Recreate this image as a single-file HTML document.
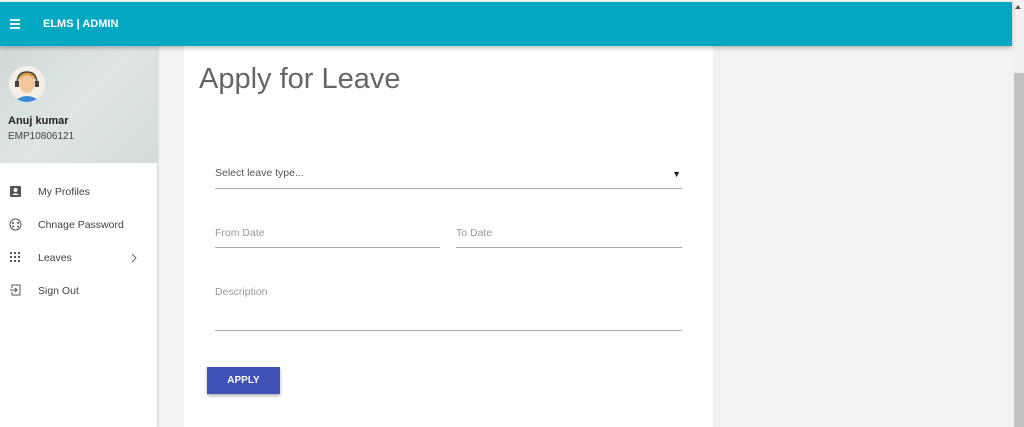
<!DOCTYPE html>
<html><head><style>
*{margin:0;padding:0;box-sizing:border-box}
body{width:1024px;height:427px;overflow:hidden;background:#f2f2f3;font-family:"Liberation Sans",sans-serif;position:relative}
.top{position:absolute;left:0;top:2px;width:1012px;height:44px;background:#00a8c1;box-shadow:0 2px 4px rgba(0,0,0,.25);z-index:3}
.top .ham{position:absolute;left:10px;top:17px;width:10px}
.top .ham i{display:block;height:1.5px;background:#e8f6f8;margin-bottom:2.5px}
.top .t{position:absolute;left:43px;top:16px;color:#fff;font-weight:bold;font-size:11px}
.sb{position:absolute;right:0;top:0;width:12px;height:427px;background:#f1f1f1}
.sb .th{position:absolute;left:2px;top:73px;width:10px;height:354px;background:#c1c1c1}
.side{position:absolute;left:0;top:46px;width:157px;height:381px;background:#fff;box-shadow:1px 0 2px rgba(0,0,0,.15)}
.prof{height:117px;background:linear-gradient(135deg,#cfd8d8 0%,#dfe5e5 50%,#d3dbdb 100%);position:relative}
.av{position:absolute;left:9px;top:20px;width:36px;height:36px;border-radius:50%;background:#f6efe6;overflow:hidden}
.name{position:absolute;left:8px;top:69px;font-size:11px;font-weight:bold;color:#222}
.emp{position:absolute;left:8px;top:85px;font-size:10px;color:#444}
.item{position:absolute;left:0;height:20px;font-size:10.5px;color:#444}
.item span{position:absolute;left:38px;top:4px;white-space:nowrap}
.card{position:absolute;left:184px;top:46px;width:529px;height:381px;background:#fff}
h1{position:absolute;left:15px;top:17px;font-weight:normal;font-size:29px;color:#666}
.f{position:absolute;font-size:10.5px;color:#999;border-bottom:1px solid #aaa;padding-top:2px}
.btn{position:absolute;left:23px;top:321px;width:73px;height:27px;background:#3f51b5;color:#fff;font-size:10px;font-weight:bold;text-align:center;line-height:27px;box-shadow:0 2px 3px rgba(0,0,0,.3)}
</style></head><body>
<div class="top"><div class="ham"><i></i><i></i><i></i></div><div class="t">ELMS | ADMIN</div></div>
<div class="side">
 <div class="prof">
  <div class="av"><svg width="36" height="36"><path d="M4 36 Q18 24 32 36Z" fill="#3b8ad6"/><ellipse cx="18" cy="17" rx="8" ry="10" fill="#f3c79a"/><path d="M10 14 Q18 4 26 14 L26 10 Q18 2 10 10Z" fill="#e09a3a"/><path d="M8 18 Q8 6 18 6 Q28 6 28 18" stroke="#444" stroke-width="1.5" fill="none"/><rect x="6" y="15" width="4" height="6" fill="#444"/><rect x="26" y="15" width="4" height="6" fill="#444"/></svg></div>
  <div class="name">Anuj kumar</div><div class="emp">EMP10806121</div>
 </div>
 <div class="item" style="top:136px"><svg style="position:absolute;left:10px;top:4px" width="11" height="11"><rect width="11" height="11" rx="1" fill="#555"/><circle cx="5.5" cy="4" r="2" fill="#fff"/><path d="M2 9 Q5.5 5.5 9 9Z" fill="#fff"/></svg><span>My Profiles</span></div>
 <div class="item" style="top:169px"><svg style="position:absolute;left:9px;top:3px" width="13" height="13"><circle cx="6.5" cy="6.5" r="5.5" stroke="#555" fill="none"/><circle cx="4" cy="5" r="1" fill="#555"/><circle cx="9" cy="5" r="1" fill="#555"/><circle cx="4" cy="8.5" r="1" fill="#555"/><circle cx="9" cy="8.5" r="1" fill="#555"/></svg><span>Chnage Password</span></div>
 <div class="item" style="top:202px;width:157px"><svg style="position:absolute;left:10px;top:4px" width="11" height="11" fill="#555"><rect x="0" y="0" width="2" height="2"/><rect x="4" y="0" width="2" height="2"/><rect x="8" y="0" width="2" height="2"/><rect x="0" y="4" width="2" height="2"/><rect x="4" y="4" width="2" height="2"/><rect x="8" y="4" width="2" height="2"/><rect x="0" y="8" width="2" height="2"/><rect x="4" y="8" width="2" height="2"/><rect x="8" y="8" width="2" height="2"/></svg><span>Leaves</span><svg style="position:absolute;left:131px;top:5px" width="6" height="10"><path d="M1 1 L5 5 L1 9" stroke="#666" fill="none"/></svg></div>
 <div class="item" style="top:235px"><svg style="position:absolute;left:9px;top:3px" width="12" height="12"><path d="M3 4 V1 H11 V11 H3 V8" stroke="#555" fill="none"/><path d="M1 6 H8 M6 4 L8 6 L6 8" stroke="#555" fill="none"/></svg><span>Sign Out</span></div>
</div>
<div class="card">
 <h1>Apply for Leave</h1>
 <div class="f" style="left:31px;top:119px;width:467px;height:24px;color:#555">Select leave type...<span style="position:absolute;right:1px;top:4px;color:#222;font-size:9px">▼</span></div>
 <div class="f" style="left:31px;top:179px;width:225px;height:23px">From Date</div>
 <div class="f" style="left:272px;top:179px;width:226px;height:23px">To Date</div>
 <div class="f" style="left:31px;top:238px;width:467px;height:47px">Description</div>
 <div class="btn">APPLY</div>
</div>
<div class="sb"><div class="th"></div><div style="position:absolute;left:3px;top:5px;border:3px solid transparent;border-bottom:4px solid #555;border-top:0"></div></div>
</body></html>
